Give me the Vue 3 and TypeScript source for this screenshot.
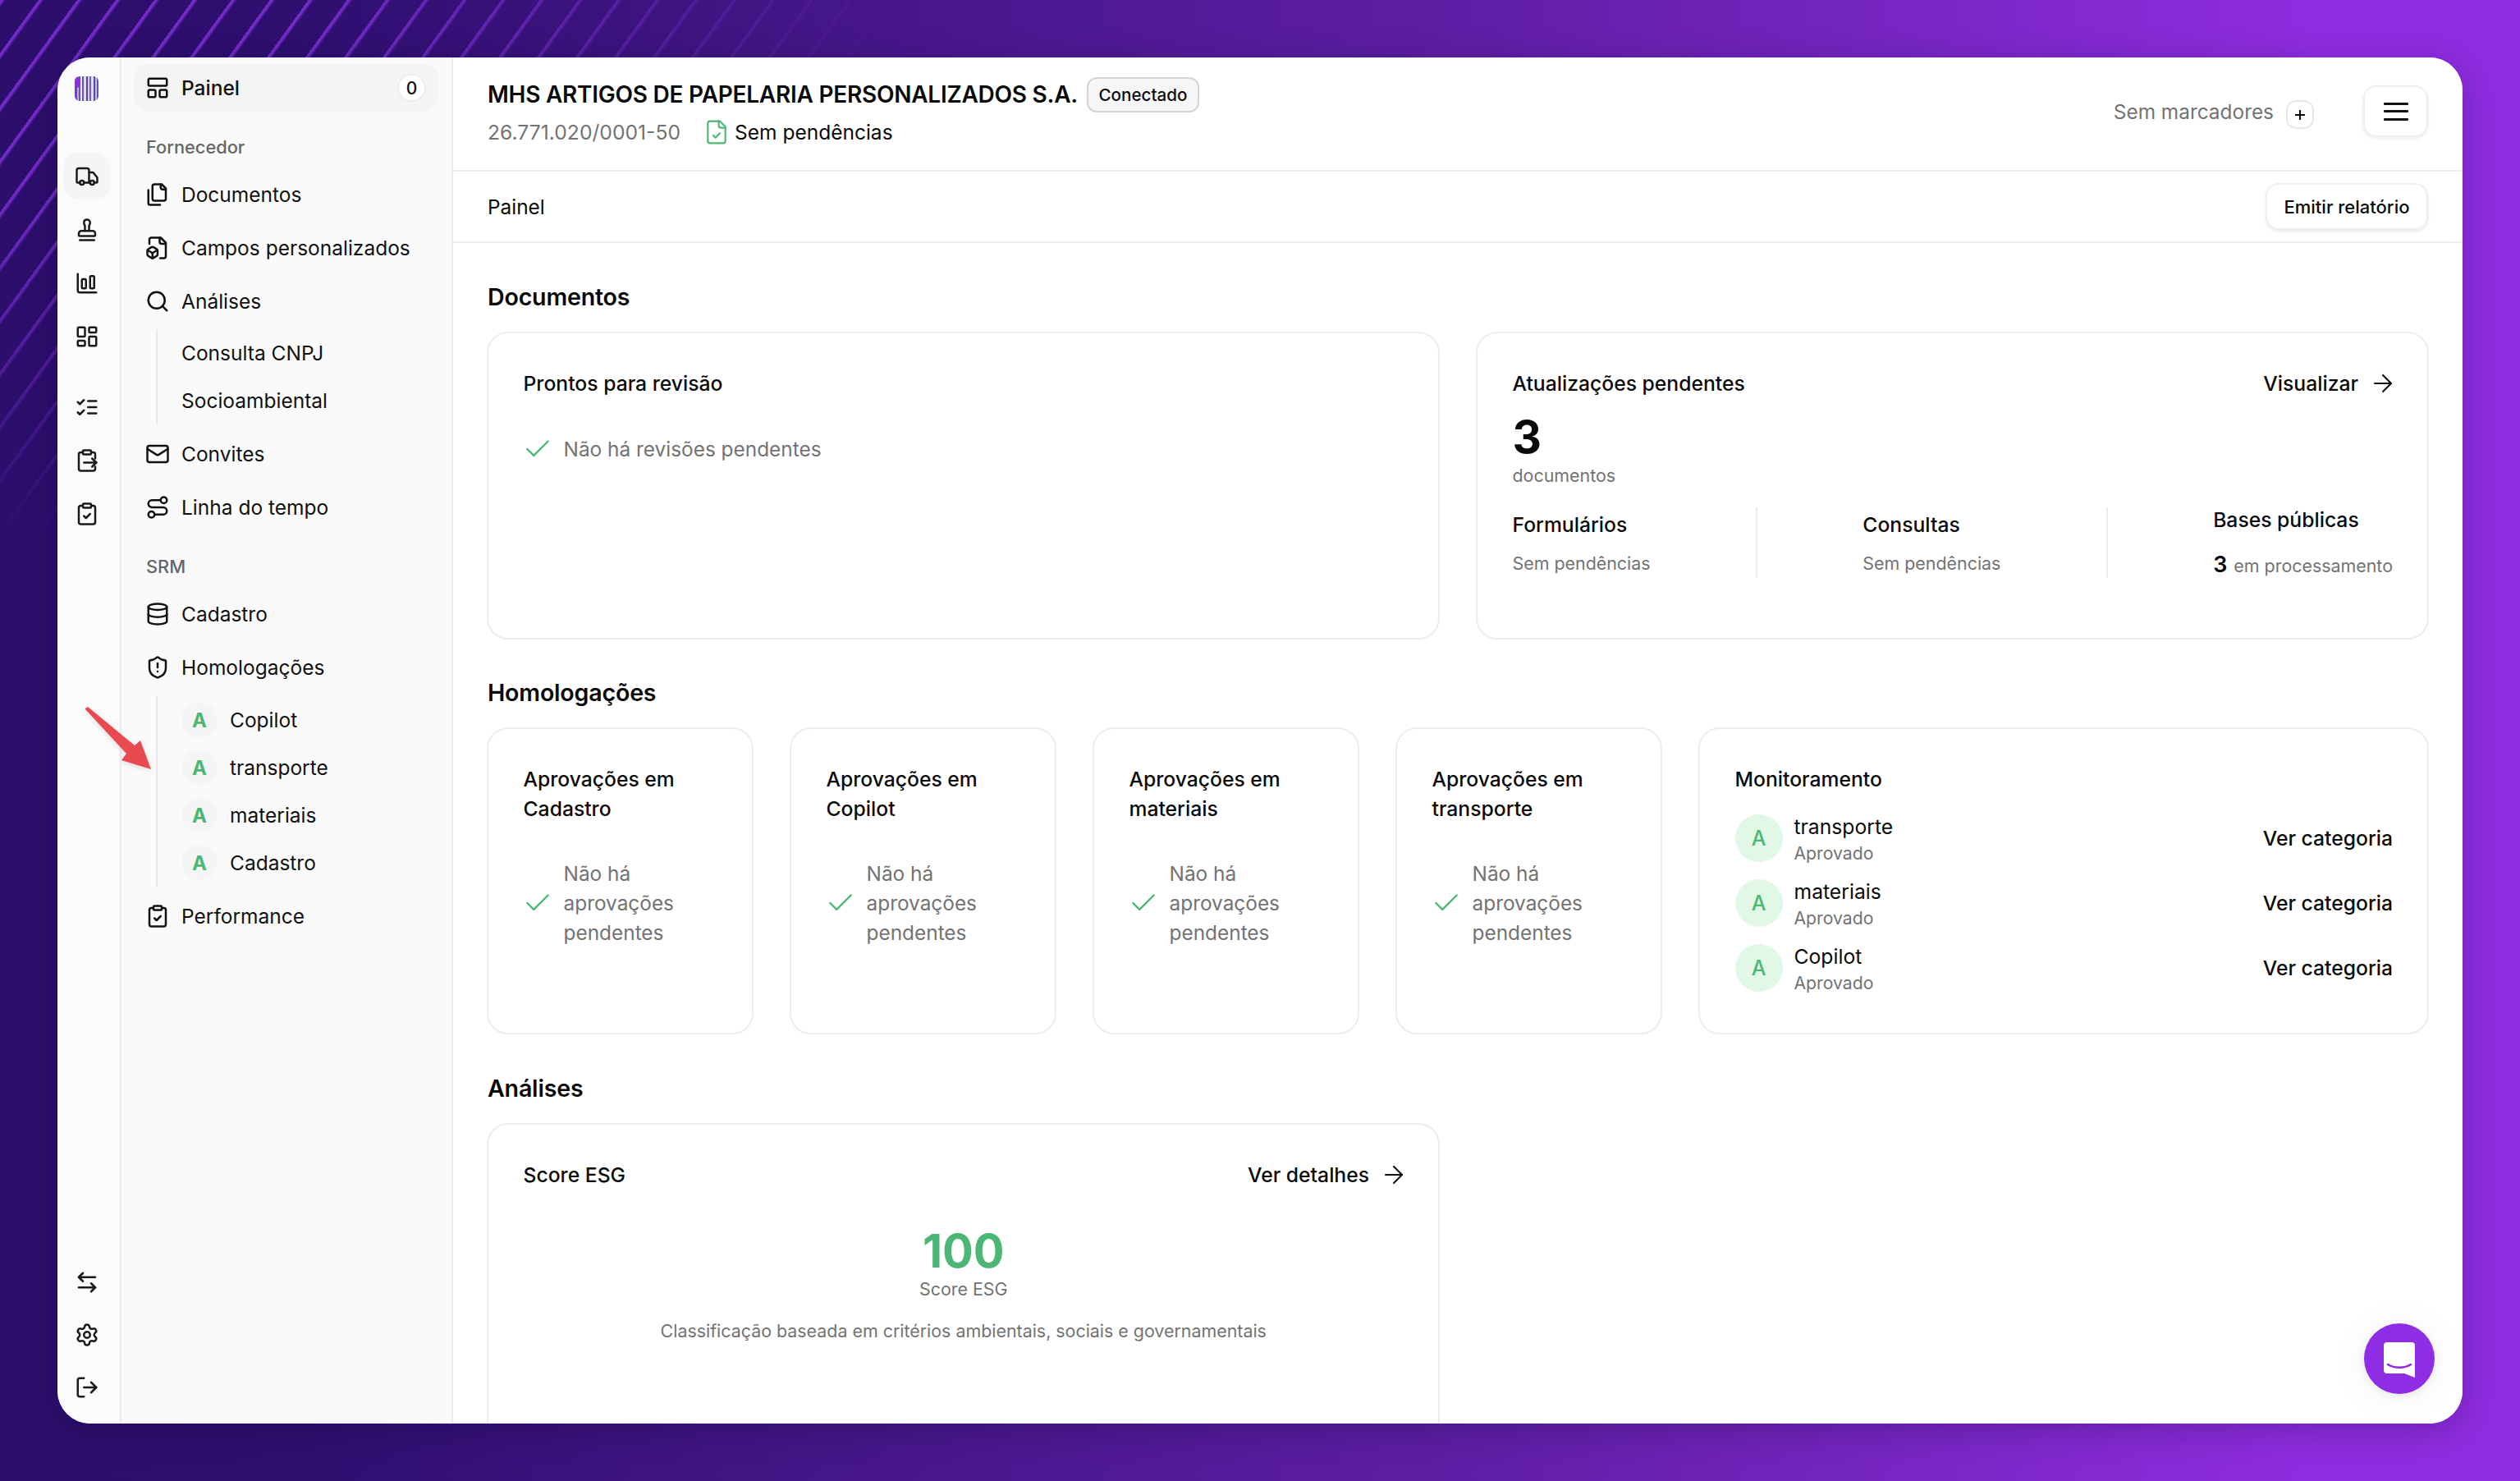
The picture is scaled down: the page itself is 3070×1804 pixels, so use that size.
<script setup lang="ts">
const icons: Record<string, string> = {
  panel: '<rect x="3" y="3" width="18" height="7" rx="1.5"/><rect x="3" y="14" width="7" height="7" rx="1.5"/><rect x="14" y="14" width="7" height="7" rx="1.5"/>',
  truck: '<path d="M14 18V6a2 2 0 0 0-2-2H4a2 2 0 0 0-2 2v11a1 1 0 0 0 1 1h2"/><path d="M15 18H9"/><path d="M19 18h2a1 1 0 0 0 1-1v-3.65a1 1 0 0 0-.22-.624l-3.48-4.35A1 1 0 0 0 17.52 8H14"/><circle cx="17" cy="18" r="2"/><circle cx="7" cy="18" r="2"/>',
  stamp: '<path d="M5 22h14"/><path d="M19.27 13.73A2.5 2.5 0 0 0 17.5 13h-11A2.5 2.5 0 0 0 4 15.5V17a1 1 0 0 0 1 1h14a1 1 0 0 0 1-1v-1.5c0-.66-.26-1.3-.73-1.77Z"/><path d="M14 13V8.5C14 7 15 7 15 5a3 3 0 0 0-3-3c-1.66 0-3 1-3 3s1 2 1 3.5V13"/>',
  chart: '<path d="M3 3v16a2 2 0 0 0 2 2h16"/><rect x="15" y="5" width="4" height="12" rx="1"/><rect x="7" y="8" width="4" height="9" rx="1"/>',
  grid: '<rect x="3" y="3" width="7" height="9" rx="1"/><rect x="14" y="3" width="7" height="5" rx="1"/><rect x="14" y="12" width="7" height="9" rx="1"/><rect x="3" y="16" width="7" height="5" rx="1"/>',
  list: '<path d="m3 17 2 2 4-4"/><path d="m3 7 2 2 4-4"/><path d="M13 6h8"/><path d="M13 12h8"/><path d="M13 18h8"/>',
  clipOut: '<rect x="8" y="2" width="8" height="4" rx="1"/><path d="M8 4H6a2 2 0 0 0-2 2v14a2 2 0 0 0 2 2h12a2 2 0 0 0 2-2v-2"/><path d="M16 4h2a2 2 0 0 1 2 2v4"/><path d="M9 14h12"/><path d="m17 10 4 4-4 4"/>',
  clipCheck: '<rect x="8" y="2" width="8" height="4" rx="1"/><path d="M16 4h2a2 2 0 0 1 2 2v14a2 2 0 0 1-2 2H6a2 2 0 0 1-2-2V6a2 2 0 0 1 2-2h2"/><path d="m9 14 2 2 4-4"/>',
  swap: '<path d="m8 3-4 4 4 4"/><path d="M4 7h16"/><path d="m16 13 4 4-4 4"/><path d="M20 17H4"/>',
  gear: '<path d="M9.671 4.136a2.34 2.34 0 0 1 4.659 0 2.34 2.34 0 0 0 3.319 1.915 2.34 2.34 0 0 1 2.33 4.033 2.34 2.34 0 0 0 0 3.831 2.34 2.34 0 0 1-2.33 4.033 2.34 2.34 0 0 0-3.319 1.915 2.34 2.34 0 0 1-4.659 0 2.34 2.34 0 0 0-3.32-1.915 2.34 2.34 0 0 1-2.33-4.033 2.34 2.34 0 0 0 0-3.831A2.34 2.34 0 0 1 6.35 6.051a2.34 2.34 0 0 0 3.319-1.915"/><circle cx="12" cy="12" r="3"/>',
  logout: '<path d="m16 17 5-5-5-5"/><path d="M21 12H9"/><path d="M9 21H5a2 2 0 0 1-2-2V5a2 2 0 0 1 2-2h4"/>',
  files: '<path d="M20 7h-3a2 2 0 0 1-2-2V2"/><path d="M9 18a2 2 0 0 1-2-2V4a2 2 0 0 1 2-2h7l4 4v10a2 2 0 0 1-2 2Z"/><path d="M3 7.6v12.8A1.6 1.6 0 0 0 4.6 22h9.8"/>',
  fileBox: '<path d="M14.5 22H18a2 2 0 0 0 2-2V7l-5-5H6a2 2 0 0 0-2 2v4"/><path d="M14 2v4a2 2 0 0 0 2 2h4"/><path d="M3 13.1a2 2 0 0 0-1 1.76v3.24a2 2 0 0 0 .97 1.78L6 21.7a2 2 0 0 0 2.03.01L11 19.9a2 2 0 0 0 1-1.76V14.9a2 2 0 0 0-.97-1.78L8 11.3a2 2 0 0 0-2.03-.01Z"/><path d="M7 17v5"/><path d="M11.7 14.2 7 17l-4.7-2.8"/>',
  search: '<circle cx="11" cy="11" r="8"/><path d="m21 21-4.3-4.3"/>',
  mail: '<path d="m22 7-8.97 5.7a1.94 1.94 0 0 1-2.06 0L2 7"/><rect x="2" y="4" width="20" height="16" rx="2"/>',
  route: '<circle cx="6" cy="19" r="3"/><path d="M9 19h8.5a3.5 3.5 0 0 0 0-7h-11a3.5 3.5 0 0 1 0-7H15"/><circle cx="18" cy="5" r="3"/>',
  database: '<ellipse cx="12" cy="5" rx="9" ry="3"/><path d="M3 5V19A9 3 0 0 0 21 19V5"/><path d="M3 12A9 3 0 0 0 21 12"/>',
  shield: '<path d="M20 13c0 5-3.5 7.5-7.66 8.95a1 1 0 0 1-.67-.01C7.5 20.5 4 18 4 13V6a1 1 0 0 1 1-1c2 0 4.5-1.2 6.24-2.72a1.17 1.17 0 0 1 1.52 0C14.51 3.81 17 5 19 5a1 1 0 0 1 1 1z"/><path d="M12 8v4"/><path d="M12 16h.01"/>',
  fileCheck: '<path d="M15 2H6a2 2 0 0 0-2 2v16a2 2 0 0 0 2 2h12a2 2 0 0 0 2-2V7Z"/><path d="M14 2v4a2 2 0 0 0 2 2h4"/><path d="m9 15 2 2 4-4"/>',
};

const railTop = ['truck', 'stamp', 'chart', 'grid'];
const railMid = ['list', 'clipOut', 'clipCheck'];
const railBottom = ['swap', 'gear', 'logout'];

const logoBars = [
  { x: 0, w: 3, c: '#8b2fe8' }, { x: 3, w: 2, c: '#b9b6c6' }, { x: 5, w: 2, c: '#6a51ac' },
  { x: 7, w: 2, c: '#e6e4ee' }, { x: 9, w: 2, c: '#6b55ae' }, { x: 11, w: 3, c: '#dcdae6' },
  { x: 14, w: 2, c: '#5c42a4' }, { x: 16, w: 2, c: '#cfccdb' }, { x: 18, w: 2, c: '#7460b4' },
  { x: 20, w: 3, c: '#dfdde8' }, { x: 23, w: 2, c: '#5f46a6' }, { x: 25, w: 2, c: '#c4c0d2' }, { x: 27, w: 2, c: '#6d56ae' },
];

const approvals = ['Cadastro', 'Copilot', 'materiais', 'transporte'];
const monitor = ['transporte', 'materiais', 'Copilot'];
const subHomolog = ['Copilot', 'transporte', 'materiais', 'Cadastro'];
</script>

<template>
  <div class="page">
    <div class="streaks"></div>

    <div class="shell">
      <aside class="rail">
        <svg class="logo" viewBox="0 0 29 30" width="29" height="30">
          <defs><clipPath id="logoClip"><rect width="29" height="30" rx="6" /></clipPath></defs>
          <g clip-path="url(#logoClip)">
            <rect v-for="b in logoBars" :key="b.x" :x="b.x" y="0" :width="b.w" height="30" :fill="b.c" />
            <ellipse cx="3" cy="7" rx="3.5" ry="7" fill="#8b2fe8" />
          </g>
        </svg>
        <div class="rail-group first">
          <div v-for="(n, i) in railTop" :key="n" class="rail-item" :class="{ on: i === 0 }">
            <svg class="ic" viewBox="0 0 24 24" v-html="icons[n]"></svg>
          </div>
        </div>
        <div class="rail-group mid">
          <div v-for="n in railMid" :key="n" class="rail-item">
            <svg class="ic" viewBox="0 0 24 24" v-html="icons[n]"></svg>
          </div>
        </div>
        <div class="rail-group bottom">
          <div v-for="n in railBottom" :key="n" class="rail-item short">
            <svg class="ic" viewBox="0 0 24 24" v-html="icons[n]"></svg>
          </div>
        </div>
      </aside>

      <nav class="side">
        <div class="nav-active">
          <svg class="ic" viewBox="0 0 24 24" v-html="icons.panel"></svg>
          <span class="grow">Painel</span>
          <span class="count">0</span>
        </div>

        <div class="label l-first">Fornecedor</div>
        <div class="nav-item"><svg class="ic" viewBox="0 0 24 24" v-html="icons.files"></svg>Documentos</div>
        <div class="nav-item"><svg class="ic" viewBox="0 0 24 24" v-html="icons.fileBox"></svg>Campos personalizados</div>
        <div class="nav-item"><svg class="ic" viewBox="0 0 24 24" v-html="icons.search"></svg>Análises</div>
        <div class="sub">
          <div class="sub-item">Consulta CNPJ</div>
          <div class="sub-item">Socioambiental</div>
        </div>
        <div class="nav-item"><svg class="ic" viewBox="0 0 24 24" v-html="icons.mail"></svg>Convites</div>
        <div class="nav-item"><svg class="ic" viewBox="0 0 24 24" v-html="icons.route"></svg>Linha do tempo</div>

        <div class="label l-second">SRM</div>
        <div class="nav-item"><svg class="ic" viewBox="0 0 24 24" v-html="icons.database"></svg>Cadastro</div>
        <div class="nav-item"><svg class="ic" viewBox="0 0 24 24" v-html="icons.shield"></svg>Homologações</div>
        <div class="sub homolog">
          <div v-for="s in subHomolog" :key="s" class="sub-item">
            <span class="mini-a">A</span>{{ s }}
          </div>
        </div>
        <div class="nav-item"><svg class="ic" viewBox="0 0 24 24" v-html="icons.clipCheck"></svg>Performance</div>
      </nav>

      <main class="main">
        <header class="head">
          <div class="head-left">
            <div class="head-row">
              <h1 class="company">MHS ARTIGOS DE PAPELARIA PERSONALIZADOS S.A.</h1>
              <span class="badge">Conectado</span>
            </div>
            <div class="head-row two">
              <span class="cnpj">26.771.020/0001-50</span>
              <svg class="ic-file" viewBox="0 0 24 24" v-html="icons.fileCheck"></svg>
              <span class="pend">Sem pendências</span>
            </div>
          </div>
          <div class="head-right">
            <span class="tags">Sem marcadores</span>
            <span class="plus">
              <svg viewBox="5 5 14 14" width="12" height="12"><path d="M5 12h14M12 5v14" /></svg>
            </span>
            <button class="burger" type="button" aria-label="Menu"><i></i><i></i><i></i></button>
          </div>
        </header>

        <div class="crumb">
          <span>Painel</span>
          <button class="report" type="button">Emitir relatório</button>
        </div>

        <div class="content">
          <h2 class="sec">Documentos</h2>
          <div class="two-col row-a">
            <section class="card">
              <div class="card-title">Prontos para revisão</div>
              <div class="empty">
                <svg class="check" viewBox="0 0 24 24"><path d="M20 6 9 17l-5-5" /></svg>
                <span>Não há revisões pendentes</span>
              </div>
            </section>
            <section class="card">
              <div class="between">
                <div class="card-title">Atualizações pendentes</div>
                <div class="link">Visualizar
                  <svg class="arrow" viewBox="5 5 14 14"><path d="M5 12h14" /><path d="m12 5 7 7-7 7" /></svg>
                </div>
              </div>
              <div class="big">3</div>
              <div class="muted doc">documentos</div>
              <div class="stats">
                <div class="stat">
                  <div class="stat-label">Formulários</div>
                  <div class="muted stat-sub">Sem pendências</div>
                </div>
                <span class="vline"></span>
                <div class="stat">
                  <div class="stat-label">Consultas</div>
                  <div class="muted stat-sub">Sem pendências</div>
                </div>
                <span class="vline"></span>
                <div class="stat raised">
                  <div class="stat-label">Bases públicas</div>
                  <div class="muted stat-sub"><b>3</b> em processamento</div>
                </div>
              </div>
            </section>
          </div>

          <h2 class="sec">Homologações</h2>
          <div class="approvals">
            <section v-for="a in approvals" :key="a" class="card">
              <div class="card-title">Aprovações em {{ a }}</div>
              <div class="empty">
                <svg class="check" viewBox="0 0 24 24"><path d="M20 6 9 17l-5-5" /></svg>
                <span>Não há aprovações pendentes</span>
              </div>
            </section>
            <section class="card">
              <div class="card-title">Monitoramento</div>
              <div class="mon-list">
                <div v-for="m in monitor" :key="m" class="mon">
                  <span class="avatar">A</span>
                  <div class="mon-text">
                    <div class="mon-name">{{ m }}</div>
                    <div class="muted mon-sub">Aprovado</div>
                  </div>
                  <div class="mon-link">Ver categoria</div>
                </div>
              </div>
            </section>
          </div>

          <h2 class="sec">Análises</h2>
          <div class="two-col">
            <section class="card esg">
              <div class="between">
                <div class="card-title">Score ESG</div>
                <div class="link">Ver detalhes
                  <svg class="arrow" viewBox="5 5 14 14"><path d="M5 12h14" /><path d="m12 5 7 7-7 7" /></svg>
                </div>
              </div>
              <div class="score">100</div>
              <div class="muted score-sub">Score ESG</div>
              <div class="muted score-desc">Classificação baseada em critérios ambientais, sociais e governamentais</div>
            </section>
          </div>
        </div>

        <div class="chat">
          <svg viewBox="0 0 38 43" width="38" height="43">
            <path fill="#fff" d="M4 0h30a4 4 0 0 1 4 4v39l-13-5H4a4 4 0 0 1-4-4V4a4 4 0 0 1 4-4z" />
            <path d="M5 27c8 5 20 5 28 0" fill="none" stroke="#8f2de4" stroke-width="2.6" stroke-linecap="round" />
          </svg>
        </div>
      </main>
    </div>

    <svg class="annot" viewBox="0 0 100 90" width="100" height="90">
      <path fill="#e84a4f" d="M1 2 L4 0 L61 47 L68 41 L81 76 L45 65 L51 57 L1 3 Z" />
    </svg>
  </div>
</template>

<style>
html, body { margin: 0; padding: 0; }
</style>

<style scoped>
* { box-sizing: border-box; }
.page {
  position: relative;
  width: 3070px;
  height: 1804px;
  padding: 70px;
  overflow: hidden;
  font-family: Inter, "Liberation Sans", sans-serif;
  color: #0a0a0a;
  background: linear-gradient(90deg, #2c0e6c 0%, #2f0f70 12%, #5f1ea5 58%, #8f2de0 92%, #8f2de0 100%);
}
.streaks {
  position: absolute;
  inset: 0;
  background: repeating-linear-gradient(126deg, rgba(130, 50, 220, 0.8) 0 3px, rgba(130, 50, 220, 0.25) 4.5px, transparent 6px 38px);
  -webkit-mask-image: radial-gradient(ellipse 1100px 660px at 0 0, #000 35%, transparent 100%);
  mask-image: radial-gradient(ellipse 1100px 660px at 0 0, #000 35%, transparent 100%);
}
.shell {
  position: relative;
  display: flex;
  width: 2930px;
  height: 1664px;
  border-radius: 40px;
  overflow: hidden;
  background: #fff;
  box-shadow: 0 8px 40px rgba(10, 0, 40, 0.25);
}

/* rail */
.rail {
  flex: none;
  width: 78px;
  display: flex;
  flex-direction: column;
  align-items: center;
  padding: 23px 5px 0 0;
  background: #fbfbfb;
  border-right: 2px solid #ececec;
}
.logo { display: block; flex: none; filter: blur(0.6px); }
.rail-group { display: flex; flex-direction: column; align-items: center; }
.rail-group.first { margin-top: 59px; }
.rail-group.mid { margin-top: 21px; }
.rail-group.bottom { margin-top: auto; padding-bottom: 12px; }
.rail-item {
  width: 57px;
  height: 65px;
  display: flex;
  align-items: center;
  justify-content: center;
  position: relative;
  color: #1a1a1a;
}
.rail-item.short { height: 64px; }
.rail-item.on::before {
  content: "";
  position: absolute;
  left: 0;
  top: 4px;
  width: 57px;
  height: 57px;
  border-radius: 18px;
  background: #f5f5f5;
}
.ic {
  position: relative;
  flex: none;
  width: 30px;
  height: 30px;
  fill: none;
  stroke: currentColor;
  stroke-width: 2;
  stroke-linecap: round;
  stroke-linejoin: round;
}

/* side nav */
.side {
  flex: none;
  width: 404px;
  padding: 8px 16px 0 15px;
  background: #fafafa;
  border-right: 2px solid #ececec;
  font-size: 24.5px;
  color: #111;
}
.nav-active {
  display: flex;
  align-items: center;
  gap: 14px;
  height: 58px;
  padding: 0 15px 0 14px;
  border-radius: 18px;
  background: #f4f4f4;
  font-weight: 500;
}
.grow { flex: 1; }
.count {
  width: 35px;
  height: 34px;
  border-radius: 17px;
  background: #fff;
  border: 2px solid #ededed;
  font-size: 21px;
  font-weight: 500;
  display: flex;
  align-items: center;
  justify-content: center;
}
.label {
  height: 50px;
  line-height: 50px;
  padding-left: 15px;
  font-size: 21.8px;
  font-weight: 500;
  color: #666;
}
.l-first { margin-top: 18px; }
.l-second { margin-top: 15px; }
.nav-item {
  display: flex;
  align-items: center;
  gap: 14px;
  height: 65px;
  padding-left: 14px;
}
.sub {
  margin: 2px 0 3px 27px;
  padding-left: 29px;
  border-left: 2px solid #e8e8e8;
}
.sub.homolog { margin-top: 3px; }
.sub-item {
  display: flex;
  align-items: center;
  height: 58px;
}
.mini-a {
  flex: none;
  width: 44px;
  height: 44px;
  margin-right: 15px;
  border-radius: 50%;
  background: #f4f6f5;
  color: #4cb774;
  font-size: 24px;
  font-weight: 700;
  display: flex;
  align-items: center;
  justify-content: center;
}

/* main */
.main {
  position: relative;
  flex: 1;
  min-width: 0;
  display: flex;
  flex-direction: column;
  background: #fff;
}
.head {
  flex: none;
  height: 139px;
  display: flex;
  align-items: flex-start;
  justify-content: space-between;
  padding: 23px 42px 0 41px;
  border-bottom: 2px solid #ececec;
}
.head-row { display: flex; align-items: center; height: 44px; }
.head-row.two { margin-top: 4px; height: 40px; }
.company {
  margin: 0 0 0 1px;
  font-size: 28px;
  font-weight: 600;
  letter-spacing: -0.25px;
  white-space: nowrap;
}
.badge {
  margin-left: 11px;
  height: 43px;
  padding: 0 12.5px;
  display: flex;
  align-items: center;
  border: 2px solid #d4d4d4;
  border-radius: 12px;
  background: #f6f6f6;
  font-size: 20.6px;
  font-weight: 500;
}
.cnpj { font-size: 24.7px; color: #737373; margin-left: 1px; }
.ic-file {
  width: 32px;
  height: 32px;
  margin-left: 28px;
  margin-right: 6px;
  fill: none;
  stroke: #4cb774;
  stroke-width: 1.6;
  stroke-linecap: round;
  stroke-linejoin: round;
}
.pend { font-size: 24.5px; }
.head-right { display: flex; align-items: flex-start; padding-top: 11px; }
.tags { font-size: 24.4px; line-height: 44px; margin-top: 10px; color: #737373; }
.plus {
  width: 34px;
  height: 35px;
  margin: 18px 0 0 15px;
  border: 2px solid #e8e8e8;
  border-radius: 12px;
  background: #fff;
  display: flex;
  align-items: center;
  justify-content: center;
}
.plus svg { fill: none; stroke: #0a0a0a; stroke-width: 2.4; }
.burger {
  width: 79px;
  height: 63px;
  margin-left: 60px;
  border: 2px solid #efefef;
  border-radius: 16px;
  background: #fff;
  box-shadow: 0 2px 4px rgba(0, 0, 0, 0.08);
  display: flex;
  flex-direction: column;
  align-items: center;
  justify-content: center;
  gap: 6.5px;
  padding: 0;
}
.burger i { display: block; width: 30px; height: 3px; background: #111; border-radius: 1px; }
.crumb {
  flex: none;
  height: 87px;
  display: flex;
  align-items: center;
  justify-content: space-between;
  padding: 0 42px;
  border-bottom: 2px solid #ececec;
  font-size: 24.4px;
}
.report {
  width: 198px;
  height: 57px;
  border: 2px solid #efefef;
  border-radius: 16px;
  background: #fff;
  box-shadow: 0 2px 4px rgba(0, 0, 0, 0.08);
  font-family: inherit;
  font-size: 22px;
  font-weight: 500;
  color: #0a0a0a;
  padding: 0;
}
.content {
  flex: 1;
  min-height: 0;
  overflow: hidden;
  padding: 44px 41px 0;
}
.sec {
  margin: 0 0 20px 1px;
  height: 44px;
  line-height: 44px;
  font-size: 28.6px;
  font-weight: 600;
  letter-spacing: -0.2px;
}
.two-col {
  display: grid;
  grid-template-columns: 1fr 1fr;
  gap: 44px;
}
.row-a { height: 375px; margin-bottom: 43px; }
.approvals {
  display: grid;
  grid-template-columns: repeat(4, 325px) 1fr;
  gap: 44px;
  height: 374px;
  margin-bottom: 44px;
}
.card {
  border: 2px solid #ededed;
  border-radius: 26px;
  padding: 43px 42px 0 42.5px;
  background: #fff;
  min-width: 0;
}
.esg { height: 520px; }
.card-title { font-size: 24.7px; line-height: 36px; font-weight: 500; }
.between { display: flex; align-items: center; justify-content: space-between; }
.link { display: flex; align-items: center; gap: 20px; font-size: 24.7px; font-weight: 500; line-height: 36px; }
.arrow {
  width: 20px;
  height: 20px;
  margin-right: 2px;
  fill: none;
  stroke: #111;
  stroke-width: 1.5;
  stroke-linecap: round;
  stroke-linejoin: round;
  overflow: visible;
}
.empty {
  display: flex;
  align-items: center;
  margin-top: 43px;
  font-size: 24.4px;
  line-height: 36px;
  color: #737373;
}
.check {
  flex: none;
  width: 38px;
  height: 38px;
  margin: 0 13px 0 -2px;
  fill: none;
  stroke: #4cb774;
  stroke-width: 1.5;
  stroke-linecap: round;
  stroke-linejoin: round;
}
.muted { color: #737373; }
.big { font-size: 55px; font-weight: 700; line-height: 54px; margin-top: 20px; }
.doc { font-size: 21.4px; line-height: 32px; margin-top: 4px; }
.stats {
  display: flex;
  justify-content: space-between;
  height: 86px;
  margin-top: 23px;
}
.vline { flex: none; width: 2px; background: #ececec; }
.stat { padding-top: 3px; }
.stat-label { font-size: 24.7px; font-weight: 500; line-height: 36px; }
.stat-sub { font-size: 21.4px; line-height: 34px; margin-top: 12px; }
.stat-sub b { font-size: 27px; font-weight: 600; color: #0a0a0a; margin-right: 2px; }
.raised { margin-top: -6px; }
.raised .stat-sub { margin-top: 20px; }
.mon-list { margin-top: 25px; display: flex; flex-direction: column; gap: 21px; }
.mon { display: flex; align-items: center; height: 58px; }
.avatar {
  flex: none;
  width: 58px;
  height: 58px;
  border-radius: 50%;
  background: #e2f8e7;
  color: #4cb774;
  font-size: 25px;
  font-weight: 500;
  display: flex;
  align-items: center;
  justify-content: center;
}
.mon-text { flex: 1; margin-left: 14px; padding-top: 3px; }
.mon-name { font-size: 24.7px; line-height: 32px; }
.mon-sub { font-size: 21.2px; line-height: 32px; }
.mon-link { font-size: 24.7px; font-weight: 500; }
.score {
  margin-top: 45px;
  text-align: center;
  font-size: 56px;
  font-weight: 700;
  line-height: 60px;
  color: #4cb774;
}
.score-sub { margin-top: 0; text-align: center; font-size: 21.4px; line-height: 32px; }
.score-desc { margin-top: 19px; text-align: center; font-size: 21.4px; line-height: 32px; }

.chat {
  position: absolute;
  right: 34px;
  bottom: 36px;
  width: 86px;
  height: 86px;
  border-radius: 50%;
  background: #8f2de4;
  box-shadow: 0 2px 10px rgba(0, 0, 0, 0.08), 0 4px 50px rgba(0, 0, 0, 0.06);
  display: flex;
  align-items: center;
  justify-content: center;
  padding-top: 2px;
}
.annot {
  position: absolute;
  left: 103px;
  top: 861px;
  filter: drop-shadow(0 2px 3px rgba(0, 0, 0, 0.12));
}
</style>
